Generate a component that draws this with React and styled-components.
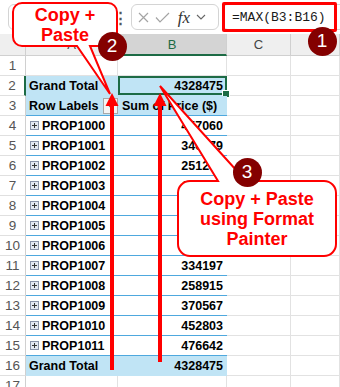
import React from "react";
import styled, { createGlobalStyle } from "styled-components";

const Global = createGlobalStyle`
  html, body { margin: 0; padding: 0; background: #fff; }
  body { width: 340px; height: 387px; overflow: hidden; font-family: "Liberation Sans", Arial, sans-serif; }
`;

const Page = styled.div`
  position: relative;
  width: 340px;
  height: 387px;
  overflow: hidden;
  background: #fff;
`;

const FormulaBar = styled.div`
  display: flex;
  align-items: center;
  height: 34px;
  padding-left: 8px;
  box-sizing: border-box;
  background: #fff;
`;

const NameBox = styled.div`
  width: 104px;
  height: 26px;
  box-sizing: border-box;
  border: 1px solid #d4d4d4;
  border-radius: 6px;
`;

const Dots = styled.div`
  width: 17px;
  text-align: center;
  color: #555;
  font-size: 15px;
  font-weight: bold;
  line-height: 1;
`;

const FxBox = styled.div`
  display: flex;
  align-items: center;
  gap: 0;
  width: 88px;
  height: 26px;
  margin-left: 2px;
  box-sizing: border-box;
  border: 1px solid #d4d4d4;
  border-radius: 6px;
  padding-left: 5px;
`;

const IconSlot = styled.span`
  display: flex;
  align-items: center;
  justify-content: center;
  width: ${(p) => p.w}px;
  height: 20px;
`;

const Fx = styled.span`
  font-family: "Liberation Serif", "Times New Roman", serif;
  font-style: italic;
  font-size: 17px;
  color: #333;
  width: 20px;
  text-align: center;
  line-height: 1;
`;

const FormulaInput = styled.div`
  flex: 1;
  height: 26px;
  margin-left: 3px;
  box-sizing: border-box;
  border: 1px solid #d4d4d4;
  border-right: none;
  border-radius: 6px 0 0 6px;
  display: flex;
  align-items: center;
  padding-left: 9px;
  font-family: "Liberation Mono", "Courier New", monospace;
  font-size: 13px;
  color: #1a1a1a;
`;

const COLS = "26px 92px 109px 64px 1fr";

const HeaderRow = styled.div`
  display: grid;
  grid-template-columns: ${COLS};
  height: 22px;
  background: #efefef;
`;

const ColHead = styled.div`
  display: flex;
  align-items: center;
  justify-content: center;
  box-sizing: border-box;
  font-size: 13px;
  color: ${(p) => (p.selected ? "#1d6b45" : "#444")};
  background: ${(p) => (p.selected ? "#d4d4d4" : "transparent")};
  border-right: 1px solid #d0d0d0;
  border-bottom: ${(p) => (p.selected ? "2px solid #1d6b45" : "1px solid #d0d0d0")};
`;

const Row = styled.div`
  display: grid;
  grid-template-columns: ${COLS};
  height: 20px;
`;

const RowNum = styled.div`
  display: flex;
  align-items: center;
  justify-content: center;
  box-sizing: border-box;
  font-size: 13.5px;
  color: #555;
  background: #fff;
  border-bottom: 1px solid #e0e0e0;
  border-right: ${(p) => (p.selected ? "2px solid #1d6b45" : "1px solid #d0d0d0")};
`;

const bgFor = (v) => (v === "total" || v === "head" ? "#c0e4f5" : "#fff");
const borderFor = (v) =>
  v === "data" || v === "head" ? "1px solid #4ea8de" : v === "total" ? "1px solid #c0e4f5" : "1px solid #e2e2e2";

const Cell = styled.div`
  position: relative;
  display: flex;
  align-items: center;
  justify-content: ${(p) => (p.right ? "flex-end" : "space-between")};
  box-sizing: border-box;
  padding: ${(p) => (p.right ? "0 4px 0 0" : p.indent ? "0 0 0 4px" : "0 0 0 3px")};
  background: ${(p) => bgFor(p.variant)};
  border-bottom: ${(p) => borderFor(p.variant)};
  border-right: ${(p) => (p.variant === "empty" ? "1px solid #e2e2e2" : "none")};
  font-size: 12.5px;
  font-weight: bold;
  color: #000;
  white-space: nowrap;
  box-shadow: ${(p) => (p.selected ? "inset 0 0 0 2px #1d6b45" : "none")};
`;

const Plain = styled.div`
  box-sizing: border-box;
  border-right: 1px solid #e2e2e2;
  border-bottom: 1px solid #e2e2e2;
`;

const Label = styled.span`
  display: flex;
  align-items: center;
  gap: 3px;
`;

const Expand = styled.span`
  display: inline-flex;
  width: 9px;
  height: 9px;
  margin-left: 1px;
`;

const FilterBtn = styled.span`
  width: 15px;
  height: 16px;
  box-sizing: border-box;
  border: 1px solid #a8a8a8;
  background: #f4f4f4;
  display: flex;
  align-items: center;
  justify-content: center;
`;

const Handle = styled.span`
  position: absolute;
  right: -3px;
  bottom: -3px;
  width: 6px;
  height: 6px;
  background: #1d6b45;
  border: 1px solid #fff;
`;

const Overlay = styled.svg`
  position: absolute;
  left: 0;
  top: 0;
  pointer-events: none;
`;

const CalloutText = styled.div`
  position: absolute;
  left: ${(p) => p.x}px;
  top: ${(p) => p.y}px;
  width: ${(p) => p.w}px;
  height: ${(p) => p.h}px;
  display: flex;
  align-items: center;
  justify-content: center;
  text-align: center;
  color: #ff0000;
  font-weight: bold;
  font-size: 18px;
  line-height: 20px;
`;

const Badge = styled.div`
  position: absolute;
  left: ${(p) => p.cx - 14.5}px;
  top: ${(p) => p.cy - 14.5}px;
  width: 29px;
  height: 29px;
  border-radius: 50%;
  background: #840000;
  color: #fff;
  font-size: 19px;
  display: flex;
  align-items: center;
  justify-content: center;
`;

const Highlight = styled.div`
  position: absolute;
  left: 222px;
  top: 2px;
  width: 115px;
  height: 30px;
  box-sizing: border-box;
  border: 3px solid #ff0000;
  border-radius: 2px;
`;

const ExpandIcon = () => (
  <svg width="9" height="9" viewBox="0 0 9 9">
    <rect x="0.5" y="0.5" width="8" height="8" fill="#e4e8f2" stroke="#8a92a8" />
    <path d="M2 4.5H7M4.5 2V7" stroke="#333" strokeWidth="1" />
  </svg>
);

const rows = [
  ["PROP1000", "457060"],
  ["PROP1001", "346579"],
  ["PROP1002", "251283"],
  ["PROP1003", "298114"],
  ["PROP1004", "312650"],
  ["PROP1005", "289407"],
  ["PROP1006", "308210"],
  ["PROP1007", "334197"],
  ["PROP1008", "258915"],
  ["PROP1009", "370567"],
  ["PROP1010", "452803"],
  ["PROP1011", "476642"],
];

const Empties = () => (
  <>
    <Plain />
    <Plain />
  </>
);

export default function App() {
  return (
    <Page>
      <Global />
      <FormulaBar>
        <NameBox />
        <Dots>⋮</Dots>
        <FxBox>
          <IconSlot w={13}>
            <svg width="11" height="11" viewBox="0 0 11 11">
              <path d="M1 1L10 10M10 1L1 10" stroke="#a4a4a4" strokeWidth="1.2" fill="none" />
            </svg>
          </IconSlot>
          <IconSlot w={24}>
            <svg width="15" height="11" viewBox="0 0 15 11">
              <path d="M1 5.5L5 10L14 1" stroke="#a4a4a4" strokeWidth="1.2" fill="none" />
            </svg>
          </IconSlot>
          <Fx>fx</Fx>
          <IconSlot w={14}>
            <svg width="10" height="6" viewBox="0 0 10 6">
              <path d="M1 1L5 5L9 1" stroke="#666" strokeWidth="1.1" fill="none" />
            </svg>
          </IconSlot>
        </FxBox>
        <FormulaInput>=MAX(B3:B16)</FormulaInput>
      </FormulaBar>

      <HeaderRow>
        <ColHead />
        <ColHead>A</ColHead>
        <ColHead selected>B</ColHead>
        <ColHead>C</ColHead>
        <ColHead />
      </HeaderRow>

      <Row>
        <RowNum>1</RowNum>
        <Cell variant="empty" />
        <Cell variant="empty" />
        <Empties />
      </Row>
      <Row>
        <RowNum selected>2</RowNum>
        <Cell variant="total">Grand Total</Cell>
        <Cell variant="total" right selected>
          4328475
          <Handle />
        </Cell>
        <Empties />
      </Row>
      <Row>
        <RowNum>3</RowNum>
        <Cell variant="head">
          Row Labels
          <FilterBtn>
            <svg width="7" height="4" viewBox="0 0 7 4">
              <path d="M0 0H7L3.5 4Z" fill="#555" />
            </svg>
          </FilterBtn>
        </Cell>
        <Cell variant="head" indent>
          Sum of Price ($)
        </Cell>
        <Empties />
      </Row>
      {rows.map(([label, value], i) => (
        <Row key={label}>
          <RowNum>{i + 4}</RowNum>
          <Cell variant="data">
            <Label>
              <Expand>
                <ExpandIcon />
              </Expand>
              {label}
            </Label>
          </Cell>
          <Cell variant="data" right>
            {value}
          </Cell>
          <Empties />
        </Row>
      ))}
      <Row>
        <RowNum>16</RowNum>
        <Cell variant="total">Grand Total</Cell>
        <Cell variant="total" right>
          4328475
        </Cell>
        <Empties />
      </Row>
      <Row>
        <RowNum>17</RowNum>
        <Cell variant="empty" />
        <Cell variant="empty" />
        <Empties />
      </Row>

      <Highlight />

      <Overlay width="340" height="387" viewBox="0 0 340 387">
        <path
          d="M22 3H108A9 9 0 0 1 117 12V37A9 9 0 0 1 108 46H90L110 94L77 46H22A9 9 0 0 1 13 37V12A9 9 0 0 1 22 3Z"
          fill="#fff"
          stroke="#ff0000"
          strokeWidth="2"
        />
        <path
          d="M190 181H218L160 86L246 181H324A12 12 0 0 1 336 193V244A12 12 0 0 1 324 256H190A12 12 0 0 1 178 244V193A12 12 0 0 1 190 181Z"
          fill="#fff"
          stroke="#ff0000"
          strokeWidth="2"
        />
        <rect x="110" y="104" width="4" height="266" fill="#ff0000" />
        <polygon points="112,93 105.5,106 118.5,106" fill="#ff0000" />
        <rect x="158" y="104" width="4" height="258" fill="#ff0000" />
        <polygon points="160,93 153.5,106 166.5,106" fill="#ff0000" />
      </Overlay>

      <CalloutText x={13} y={3} w={104} h={43}>
        Copy +
        <br />
        Paste
      </CalloutText>
      <CalloutText x={178} y={181} w={158} h={75}>
        Copy + Paste
        <br />
        using Format
        <br />
        Painter
      </CalloutText>

      <Badge cx={322} cy={41}>1</Badge>
      <Badge cx={112} cy={46}>2</Badge>
      <Badge cx={247} cy={172}>3</Badge>
    </Page>
  );
}
